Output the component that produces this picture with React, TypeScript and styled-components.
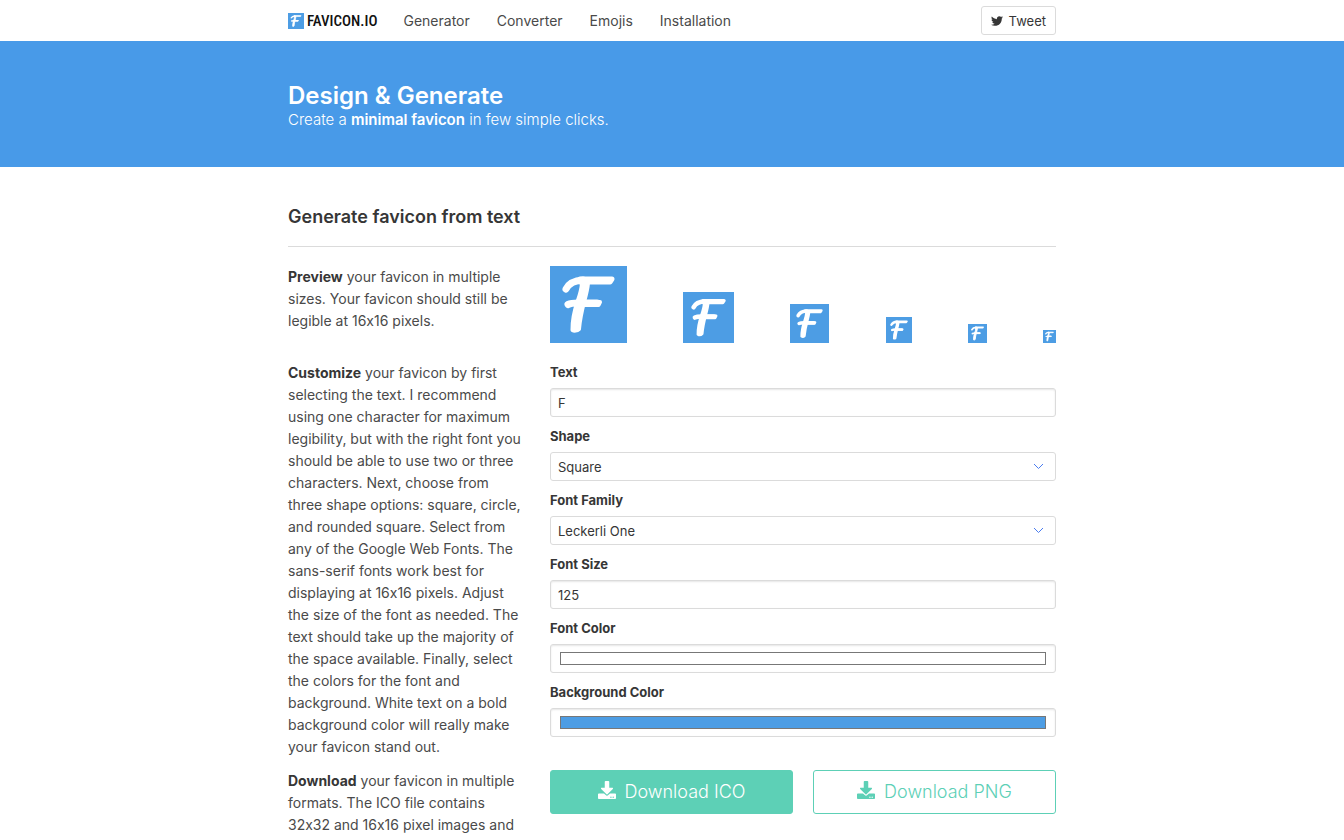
import React, { useState } from "react";
import styled, { createGlobalStyle, css } from "styled-components";
import { FaDownload, FaTwitter } from "react-icons/fa";

const GlobalStyle = createGlobalStyle`
  *, *::before, *::after { box-sizing: border-box; }
  body {
    margin: 0;
    background: #fff;
    color: #4a4a4a;
    font-family: Inter, "Liberation Sans", sans-serif;
    font-size: 14px;
    font-variant-ligatures: no-contextual;
    line-height: 22px;
  }
  h1, h2, p { margin: 0; }
`;

const Container = styled.div`
  width: 100%;
  max-width: 768px;
  margin: 0 auto;
`;

const Header = styled.header`
  background: #fff;
`;

const NavBar = styled(Container)`
  display: flex;
  align-items: center;
  height: 41px;
`;

const Brand = styled.a`
  display: flex;
  align-items: center;
  gap: 3px;
  margin-right: 26px;
  color: #111;
  font-family: "Roboto Condensed", "Liberation Sans Narrow", "Liberation Sans", sans-serif;
  font-size: 15px;
  font-weight: 500;
  text-decoration: none;
`;

const NavLinks = styled.nav`
  display: flex;
  flex: 1;
  gap: 27px;
`;

const NavLink = styled.a`
  color: #4a4a4a;
  font-size: 14px;
  text-decoration: none;
`;

const TweetButton = styled.button`
  display: flex;
  align-items: center;
  gap: 6px;
  height: 29px;
  padding: 0 9px;
  border: 1px solid #dbdbdb;
  border-radius: 3px;
  background: #fff;
  color: #363636;
  font: inherit;
  font-size: 13px;
`;

const Hero = styled.section`
  padding: 41px 0 37px;
  background: #489ae8;
  color: #fff;
`;

const HeroTitle = styled.h1`
  font-size: 24px;
  font-weight: 600;
  line-height: 28px;
`;

const HeroSubtitle = styled.p`
  font-size: 15px;
  font-weight: 300;
  line-height: 20px;
  strong { font-weight: 600; }
`;

const Section = styled.main`
  padding-top: 38px;
`;

const SectionTitle = styled.h2`
  padding-bottom: 17px;
  border-bottom: 1px solid #dbdbdb;
  color: #363636;
  font-size: 18px;
  font-weight: 600;
  line-height: 24px;
`;

const Columns = styled.div<{ $top: number }>`
  display: flex;
  margin: ${(p) => p.$top}px -9px 0;
`;

const Aside = styled.div`
  flex: 0 0 33.3333%;
  min-width: 0;
  padding: 0 9px;
`;

const Content = styled.div`
  flex: 1;
  min-width: 0;
  padding: 0 9px;
`;

const Copy = styled.p`
  padding-right: 8px;
  strong { color: #363636; font-weight: 700; }
`;

const NoBreak = styled.span`
  white-space: nowrap;
`;

const PreviewRow = styled.div`
  display: flex;
  align-items: flex-end;
  justify-content: space-between;
`;

const Mark = styled.svg`
  display: block;
  flex: none;
`;

const Fields = styled.form`
  display: flex;
  flex-direction: column;
  gap: 9px;
`;

const Field = styled.div`
  display: flex;
  flex-direction: column;
  gap: 6px;
`;

const Label = styled.label`
  color: #363636;
  font-size: 13px;
  font-weight: 700;
  line-height: 20px;
`;

const control = css`
  display: block;
  width: 100%;
  height: 29px;
  margin: 0;
  border: 1px solid #dbdbdb;
  border-radius: 3px;
  background: #fff;
  color: #363636;
  font: inherit;
  font-size: 13px;
`;

const TextInput = styled.input`
  ${control}
  padding: 0 7px;
  box-shadow: inset 0 1px 2px rgba(10, 10, 10, 0.1);
`;

const ColorInput = styled.input`
  ${control}
  padding: 7px 9px;
  appearance: none;
  box-shadow: inset 0 1px 2px rgba(10, 10, 10, 0.1);
  &::-webkit-color-swatch-wrapper { padding: 0; }
  &::-webkit-color-swatch { border: 1px solid #777; border-radius: 0; }
`;

const SelectWrap = styled.div`
  display: grid;
  align-items: center;
  > * { grid-area: 1 / 1; }
`;

const Select = styled.select`
  ${control}
  padding: 0 28px 0 7px;
  appearance: none;
`;

const Chevron = styled.svg`
  justify-self: end;
  margin-right: 12px;
  pointer-events: none;
`;

const Buttons = styled.div`
  display: grid;
  grid-template-columns: 1fr 1fr;
  gap: 20px;
`;

const DownloadButton = styled.button<{ $outlined?: boolean }>`
  display: flex;
  align-items: center;
  justify-content: center;
  gap: 9px;
  height: 44px;
  padding: 0;
  border: 1px solid #5dd0b6;
  border-radius: 3px;
  background: ${(p) => (p.$outlined ? "#fff" : "#5dd0b6")};
  color: ${(p) => (p.$outlined ? "#5dd0b6" : "#fff")};
  font: inherit;
  font-size: 18px;
  font-weight: 300;
  svg { margin-bottom: 4px; }
`;

function FaviconMark({ size }: { size: number }) {
  return (
    <Mark width={size} height={size} viewBox="0 0 77 77" aria-hidden="true">
      <rect width="77" height="77" fill="#4d9de4" />
      <g fill="none" stroke="#fff" strokeLinejoin="round" strokeLinecap="round">
        <path d="M16 23C19 17 25 14.500 33 14" strokeWidth="7" />
        <path d="M30 13H62L60 16H30Z" fill="#fff" strokeWidth="5" />
        <path d="M32 17H38C37 30 31 41 29 63C27 65 24 65 22.500 64C22 42 31 33 32 17Z" fill="#fff" strokeWidth="4" />
        <path d="M18 38.500C21 37 24 37 28 37H47" strokeWidth="7" />
        <path d="M28 36H50L48.500 39H28Z" fill="#fff" strokeWidth="4" />
      </g>
    </Mark>
  );
}

function SelectField({ id, label, options }: { id: string; label: string; options: string[] }) {
  return (
    <Field>
      <Label htmlFor={id}>{label}</Label>
      <SelectWrap>
        <Select id={id}>
          {options.map((o) => (
            <option key={o}>{o}</option>
          ))}
        </Select>
        <Chevron width="11" height="7" viewBox="0 0 11 7" aria-hidden="true">
          <path d="M1 1L5.500 5.500L10 1" fill="none" stroke="#4a7cf0" strokeWidth="1" />
        </Chevron>
      </SelectWrap>
    </Field>
  );
}

const links = ["Generator", "Converter", "Emojis", "Installation"];
const previewSizes = [77, 51, 39, 26, 19, 13];

export default function App() {
  const [text, setText] = useState("F");
  const [size, setSize] = useState("125");
  const [fontColor, setFontColor] = useState("#ffffff");
  const [background, setBackground] = useState("#4d9de4");

  return (
    <>
      <GlobalStyle />
      <Header>
        <NavBar>
          <Brand href="#">
            <FaviconMark size={16} />
            FAVICON.IO
          </Brand>
          <NavLinks>
            {links.map((l) => (
              <NavLink key={l} href="#">{l}</NavLink>
            ))}
          </NavLinks>
          <TweetButton type="button">
            <FaTwitter size={12} />
            Tweet
          </TweetButton>
        </NavBar>
      </Header>
      <Hero>
        <Container>
          <HeroTitle>Design &amp; Generate</HeroTitle>
          <HeroSubtitle>
            Create a <strong>minimal favicon</strong> in few simple clicks.
          </HeroSubtitle>
        </Container>
      </Hero>
      <Section>
        <Container>
          <SectionTitle>Generate favicon from text</SectionTitle>
          <Columns $top={19}>
            <Aside>
              <Copy>
                <strong>Preview</strong> your favicon in multiple sizes. Your favicon should still
                be legible at 16x16 pixels.
              </Copy>
            </Aside>
            <Content>
              <PreviewRow>
                {previewSizes.map((s) => (
                  <FaviconMark key={s} size={s} />
                ))}
              </PreviewRow>
            </Content>
          </Columns>
          <Columns $top={19}>
            <Aside>
              <Copy>
                <strong>Customize</strong> your favicon by first selecting the text. I recommend
                using one character for maximum legibility, but with the right font you should be
                able to use two or three characters. Next, choose from three shape options: square,
                circle, and rounded square. Select from any of the Google Web Fonts. The{" "}
                <NoBreak>sans-serif</NoBreak> fonts work best for displaying at 16x16 pixels. Adjust
                the size of the font as needed. The text should take up the majority of the space
                available. Finally, select the colors for the font and background. White text on a
                bold background color will really make your favicon stand out.
              </Copy>
            </Aside>
            <Content>
              <Fields>
                <Field>
                  <Label htmlFor="text">Text</Label>
                  <TextInput id="text" value={text} onChange={(e) => setText(e.target.value)} />
                </Field>
                <SelectField id="shape" label="Shape" options={["Square", "Circle", "Rounded"]} />
                <SelectField id="family" label="Font Family" options={["Leckerli One"]} />
                <Field>
                  <Label htmlFor="size">Font Size</Label>
                  <TextInput id="size" value={size} onChange={(e) => setSize(e.target.value)} />
                </Field>
                <Field>
                  <Label htmlFor="font-color">Font Color</Label>
                  <ColorInput
                    id="font-color"
                    type="color"
                    value={fontColor}
                    onChange={(e) => setFontColor(e.target.value)}
                  />
                </Field>
                <Field>
                  <Label htmlFor="background">Background Color</Label>
                  <ColorInput
                    id="background"
                    type="color"
                    value={background}
                    onChange={(e) => setBackground(e.target.value)}
                  />
                </Field>
              </Fields>
            </Content>
          </Columns>
          <Columns $top={12}>
            <Aside>
              <Copy>
                <strong>Download</strong> your favicon in multiple formats. The ICO file contains
                32x32 and 16x16 pixel images and
              </Copy>
            </Aside>
            <Content>
              <Buttons>
                <DownloadButton type="button">
                  <FaDownload size={18} />
                  Download ICO
                </DownloadButton>
                <DownloadButton type="button" $outlined>
                  <FaDownload size={18} />
                  Download PNG
                </DownloadButton>
              </Buttons>
            </Content>
          </Columns>
        </Container>
      </Section>
    </>
  );
}
